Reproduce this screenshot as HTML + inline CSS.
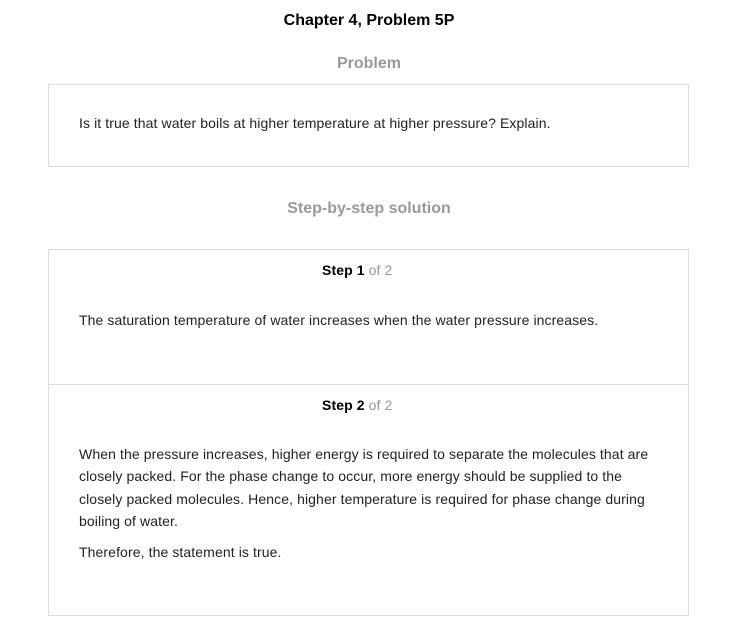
<!DOCTYPE html>
<html><head><meta charset="utf-8"><style>
body{margin:0;width:738px;height:642px;background:#fff;font-family:"Liberation Sans",Arial,sans-serif;color:#222;position:relative;overflow:hidden}
.a{position:absolute;white-space:nowrap}
.c{left:0;width:738px;text-align:center}
.box{position:absolute;left:48px;width:639px;border:1px solid #ddd}
p{margin:0}
.t{font-size:14px;letter-spacing:0.1px}
</style></head><body>
<div class="a c" style="top:12px;font-size:16px;font-weight:bold;color:#000">Chapter 4, Problem 5P</div>
<div class="a c" style="top:55px;font-size:16px;font-weight:bold;color:#999">Problem</div>
<div class="box" style="top:84px;height:81px"></div>
<div class="a t" style="left:79px;top:115px">Is it true that water boils at higher temperature at higher pressure? Explain.</div>
<div class="a c" style="top:200px;font-size:16px;font-weight:bold;color:#999">Step-by-step solution</div>
<div class="box" style="top:249px;height:365px"></div>
<div class="a" style="left:49px;width:639px;top:384px;height:1px;background:#ddd"></div>
<div class="a t" style="left:322px;top:262px;color:#000"><b>Step 1</b> <span style="color:#999">of 2</span></div>
<div class="a t" style="left:79px;top:312px">The saturation temperature of water increases when the water pressure increases.</div>
<div class="a t" style="left:322px;top:397px;color:#000"><b>Step 2</b> <span style="color:#999">of 2</span></div>
<div class="a t" style="left:79px;top:443px;line-height:22.3px">When the pressure increases, higher energy is required to separate the molecules that are<br>closely packed. For the phase change to occur, more energy should be supplied to the<br>closely packed molecules. Hence, higher temperature is required for phase change during<br>boiling of water.</div>
<div class="a t" style="left:79px;top:544px">Therefore, the statement is true.</div>
</body></html>
